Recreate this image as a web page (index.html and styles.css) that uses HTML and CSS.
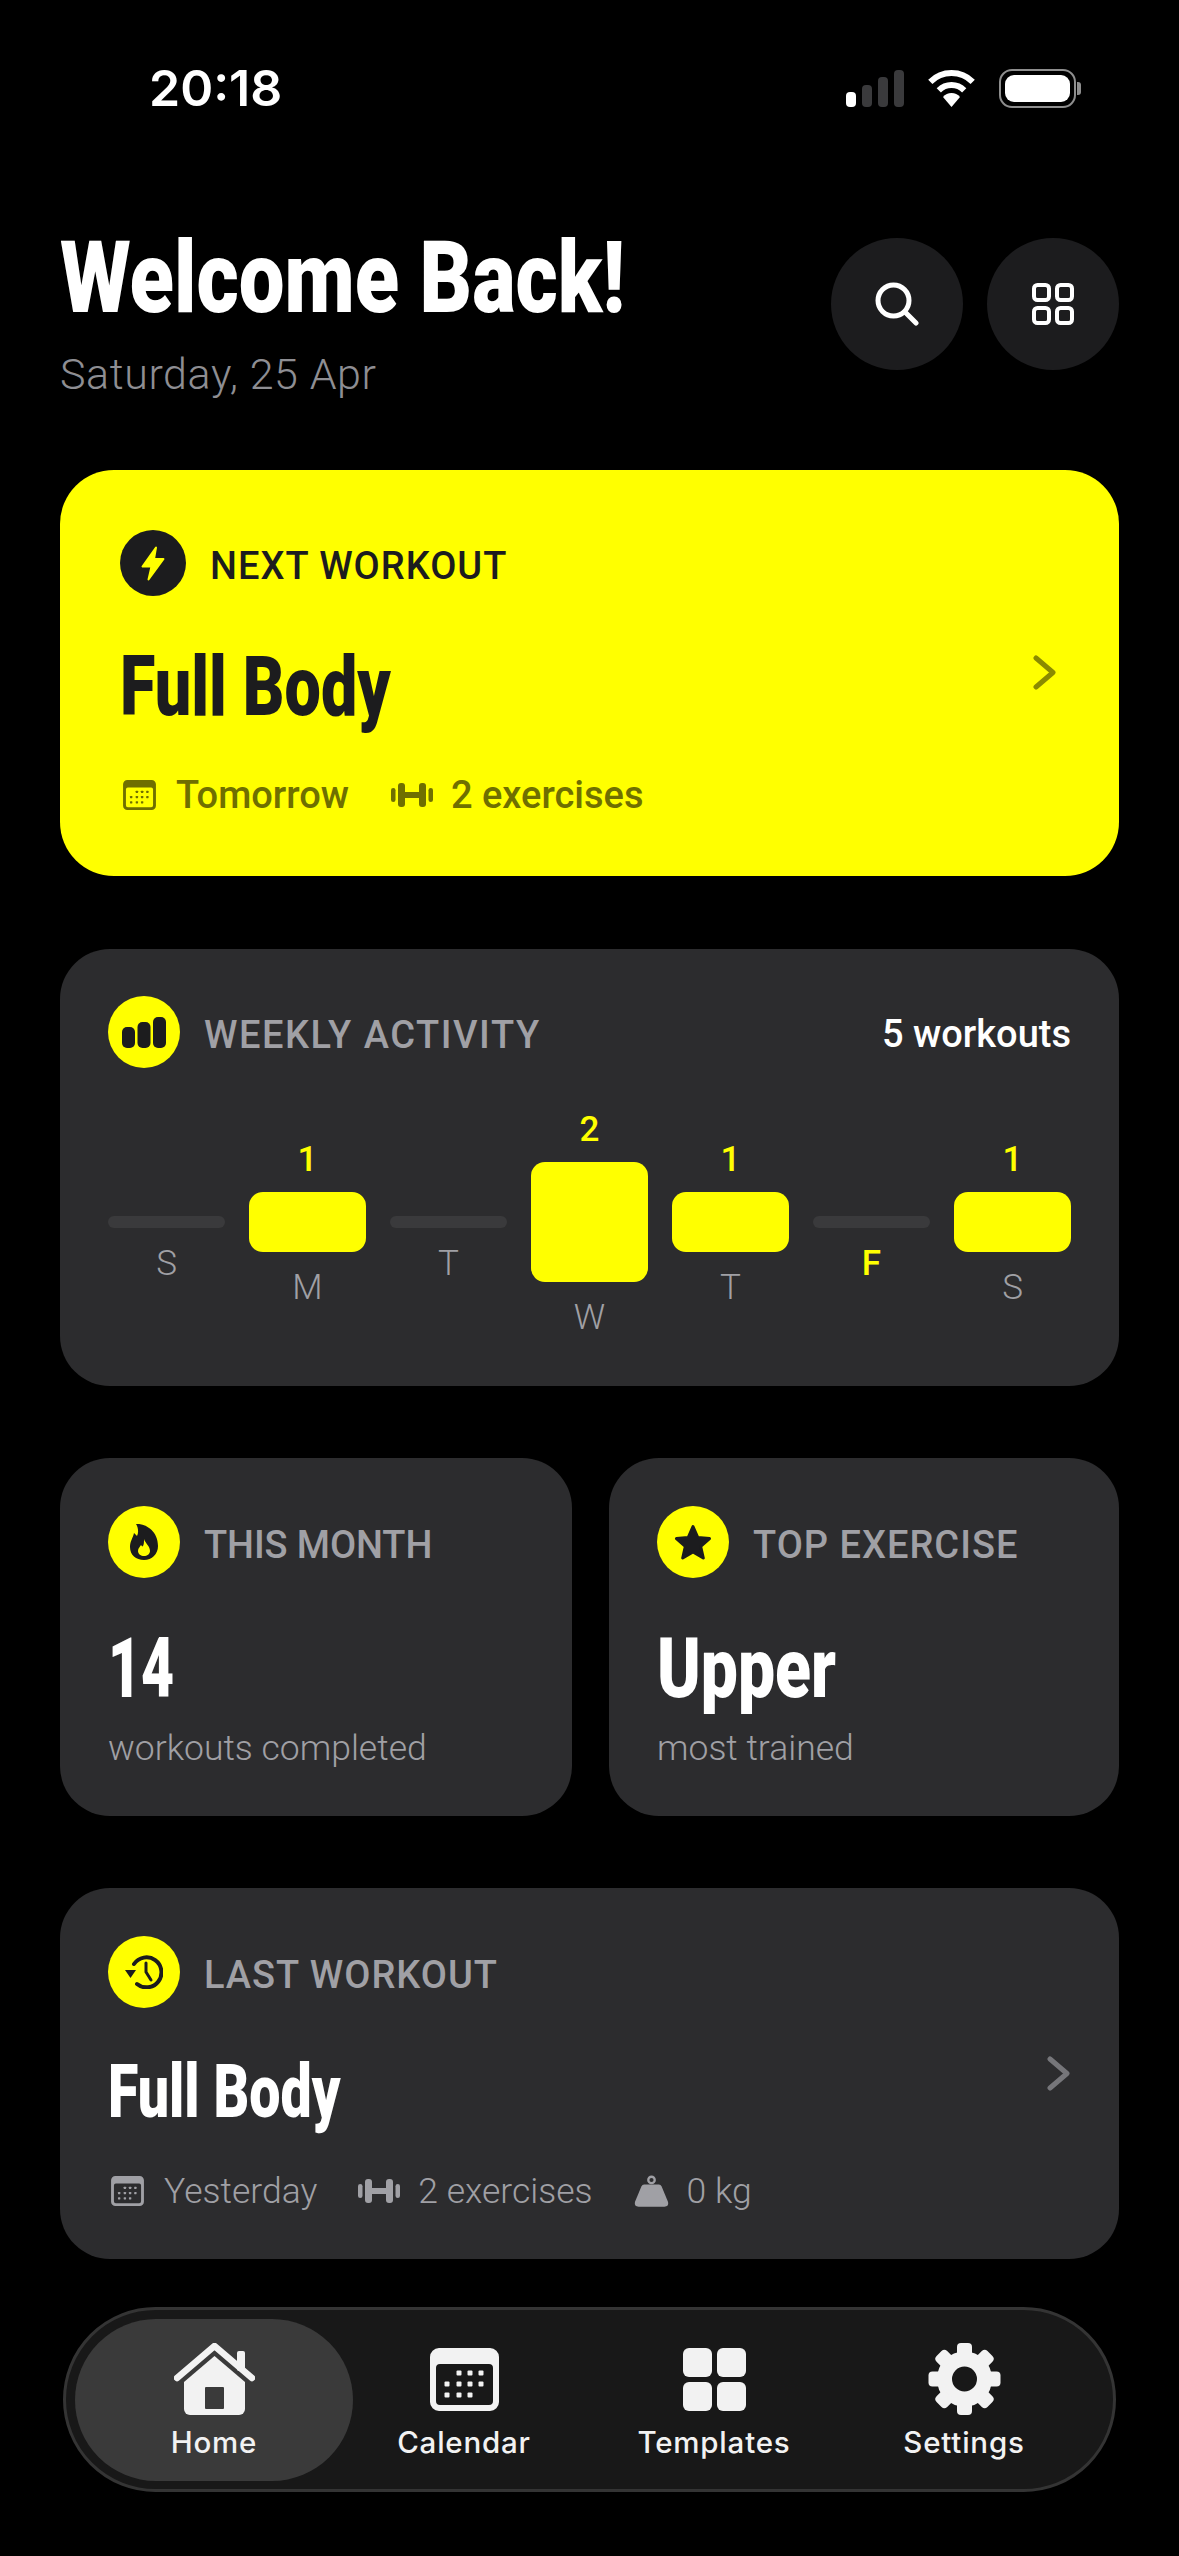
FILE: index.html
```html
<!doctype html>
<html lang="en">
<head>
  <meta charset="UTF-8" />
  <meta name="viewport" content="width=device-width, initial-scale=1.0" />
  <title>Home</title>
  <link rel="stylesheet" href="styles.css">
</head>
<body>

  <!-- shared icons -->
  <svg class="defs" width="0" height="0">
    <symbol id="cal" viewBox="0 0 69 63">
      <path fill-rule="evenodd" d="M9 0H60a9 9 0 0 1 9 9V54a9 9 0 0 1-9 9H9a9 9 0 0 1-9-9V9a9 9 0 0 1 9-9ZM10 16a4 4 0 0 0-4 4V53a4 4 0 0 0 4 4H59a4 4 0 0 0 4-4V20a4 4 0 0 0-4-4Z"/>
      <rect x="26.500" y="22.500" width="5" height="5" rx="1"/><rect x="37.500" y="22.500" width="5" height="5" rx="1"/><rect x="48.500" y="22.500" width="5" height="5" rx="1"/>
      <rect x="14.500" y="33.500" width="5" height="5" rx="1"/><rect x="26.500" y="33.500" width="5" height="5" rx="1"/><rect x="37.500" y="33.500" width="5" height="5" rx="1"/><rect x="48.500" y="33.500" width="5" height="5" rx="1"/>
      <rect x="14.500" y="44.500" width="5" height="5" rx="1"/><rect x="26.500" y="44.500" width="5" height="5" rx="1"/><rect x="37.500" y="44.500" width="5" height="5" rx="1"/>
    </symbol>
    <symbol id="bell" viewBox="0 0 42 26">
      <rect x="0" y="6" width="4.500" height="14" rx="2.250"/><rect x="7" y="1" width="7" height="24" rx="3"/><rect x="14" y="10" width="14" height="6"/><rect x="28" y="1" width="7" height="24" rx="3"/><rect x="37.500" y="6" width="4.500" height="14" rx="2.250"/>
    </symbol>
    <symbol id="chev" viewBox="0 0 25 35">
      <path d="M4 3L21 17.500L4 32" fill="none" stroke="currentColor" stroke-width="5" stroke-linecap="round" stroke-linejoin="round"/>
    </symbol>
  </svg>

  <div class="status">
    <span class="time">20:18</span>
    <div class="status-icons">
      <div class="signal">
        <i class="s1"></i><i class="s2"></i><i class="s3"></i><i class="s4"></i>
      </div>
      <svg class="wifi" width="51" height="37" viewBox="0 0 51 37" fill="none" stroke="#fff" stroke-width="6">
        <path d="M4.300 11.800A30 30 0 0 1 46.700 11.800"/>
        <path d="M12.800 20.300A18 18 0 0 1 38.200 20.300"/>
        <path d="M25.500 37L17 27A11 11 0 0 1 34 27Z" fill="#fff" stroke="none"/>
      </svg>
      <div class="battery"><div class="battery-fill"></div></div>
    </div>
  </div>

  <header class="header">
    <div>
      <h1 class="title">Welcome Back!</h1>
      <p class="date">Saturday, 25 Apr</p>
    </div>
    <div class="header-btns">
      <div class="round-btn">
        <svg width="44" height="44" viewBox="0 0 44 44" fill="none" stroke="#fff" stroke-width="5" stroke-linecap="round"><circle cx="18.500" cy="18.500" r="15.500"/><path d="M30 30L41 41"/></svg>
      </div>
      <div class="round-btn">
        <svg width="42" height="42" viewBox="0 0 42 42" fill="none" stroke="#fff" stroke-width="4"><rect x="2" y="2" width="15" height="15" rx="3.500"/><rect x="25" y="2" width="15" height="15" rx="3.500"/><rect x="2" y="25" width="15" height="15" rx="3.500"/><rect x="25" y="25" width="15" height="15" rx="3.500"/></svg>
      </div>
    </div>
  </header>

  <main class="cards">

    <section class="card next">
      <div class="card-body">
        <div class="card-head">
          <span class="badge badge-dark">
            <svg width="24" height="35" viewBox="0 0 24 35"><path d="M15 1.500L1.500 20.500H10.500L7.500 33.500L22.500 13H13Z" fill="#ffff00" stroke="#ffff00" stroke-width="2" stroke-linejoin="round"/></svg>
          </span>
          <span class="label label-dark">NEXT WORKOUT</span>
        </div>
        <h2 class="big-name">Full Body</h2>
        <div class="meta meta-dark">
          <span class="meta-item"><svg class="ic-cal"><use href="#cal"/></svg>Tomorrow</span>
          <span class="meta-item tight"><svg class="ic-bell"><use href="#bell"/></svg>2 exercises</span>
        </div>
      </div>
      <svg class="chev chev-next"><use href="#chev"/></svg>
    </section>

    <section class="card week">
      <div class="week-head">
        <div class="card-head">
          <span class="badge">
            <svg width="44" height="31" viewBox="0 0 44 31" fill="#1c1c1e"><rect x="0" y="10" width="13" height="21" rx="5"/><rect x="15.500" y="5" width="13" height="26" rx="5"/><rect x="31" y="0" width="13" height="31" rx="5"/></svg>
          </span>
          <span class="label label-wide">WEEKLY ACTIVITY</span>
        </div>
        <span class="week-total">5 workouts</span>
      </div>
      <div class="chart">
        <div class="day"><span class="count"></span><div class="bar bar-0"></div><span class="day-name">S</span></div>
        <div class="day"><span class="count">1</span><div class="bar bar-1"></div><span class="day-name">M</span></div>
        <div class="day"><span class="count"></span><div class="bar bar-0"></div><span class="day-name">T</span></div>
        <div class="day"><span class="count">2</span><div class="bar bar-2"></div><span class="day-name">W</span></div>
        <div class="day"><span class="count">1</span><div class="bar bar-1"></div><span class="day-name">T</span></div>
        <div class="day"><span class="count"></span><div class="bar bar-0"></div><span class="day-name today">F</span></div>
        <div class="day"><span class="count">1</span><div class="bar bar-1"></div><span class="day-name">S</span></div>
      </div>
    </section>

    <div class="two-up">
      <section class="card small">
        <div class="card-head">
          <span class="badge">
            <svg width="28" height="36" viewBox="0 0 28 36"><path d="M6 0C14-1 28 6 28 22C28 30 22 36 14 36C6 36 0 31 0 23C0 17 3 14 4 9C6 11 7 12 7 12C9 8 8 3 6 0Z" fill="#1c1c1e"/><path d="M14 15C15 19 20 22 20 27C20 30 17 32 14 32C11 32 8 30 8 27C8 24 10 23 11 21C12 22 12 23 13 22C14 20 14 18 14 15Z" fill="#ffff00"/></svg>
          </span>
          <span class="label label-narrow">THIS MONTH</span>
        </div>
        <div class="big-name value digits">14</div>
        <p class="sub">workouts completed</p>
      </section>
      <section class="card small">
        <div class="card-head">
          <span class="badge">
            <svg width="38" height="36" viewBox="0 0 38 36"><path d="M19 2.500L23.800 13.500L35.500 14.600L26.700 22.500L29.300 34L19 28L8.700 34L11.300 22.500L2.500 14.600L14.200 13.500Z" fill="#1c1c1e" stroke="#1c1c1e" stroke-width="3" stroke-linejoin="round"/></svg>
          </span>
          <span class="label">TOP EXERCISE</span>
        </div>
        <div class="big-name value">Upper</div>
        <p class="sub">most trained</p>
      </section>
    </div>

    <section class="card last">
      <div class="card-body">
        <div class="card-head">
          <span class="badge">
            <svg width="38" height="34" viewBox="0 0 38 34" fill="none" stroke="#1c1c1e" stroke-width="4" stroke-linecap="round" stroke-linejoin="round"><path d="M9 9A15 15 0 1 1 12 29"/><path d="M21 8V17L26 25" stroke-width="3"/><path d="M0 15H11L5.500 23Z" fill="#1c1c1e" stroke="none"/></svg>
          </span>
          <span class="label">LAST WORKOUT</span>
        </div>
        <h2 class="big-name last-name">Full Body</h2>
        <div class="meta meta-last">
          <span class="meta-item"><svg class="ic-cal"><use href="#cal"/></svg>Yesterday</span>
          <span class="meta-item tight"><svg class="ic-bell"><use href="#bell"/></svg>2 exercises</span>
          <span class="meta-item weight">
            <svg width="35" height="34" viewBox="0 0 38 34"><circle cx="19" cy="5" r="3.500" fill="none" stroke="#a0a0a5" stroke-width="2.500"/><path d="M11 10H27Q29 10 30 12L37 29Q38 34 33 34H5Q0 34 1 29L8 12Q9 10 11 10Z"/></svg>
            0 kg
          </span>
        </div>
      </div>
      <svg class="chev chev-last"><use href="#chev"/></svg>
    </section>

  </main>

  <nav class="tabbar">
    <div class="tab active">
      <span class="tab-icon">
        <svg width="81" height="72" viewBox="0 0 81 72" fill="#f2f2f2"><path d="M3 35L40.500 3L78 35" fill="none" stroke="#f2f2f2" stroke-width="6.500" stroke-linecap="round" stroke-linejoin="round"/><rect x="63" y="8" width="8" height="20" rx="2"/><path d="M40.500 13L71 39V66a6 6 0 0 1-6 6H16a6 6 0 0 1-6-6V39Z"/><rect x="31" y="44" width="19" height="22" rx="1" fill="#3a3a3a"/></svg>
      </span>
      <span class="tab-name">Home</span>
    </div>
    <div class="tab">
      <span class="tab-icon"><svg class="ic-tabcal"><use href="#cal"/></svg></span>
      <span class="tab-name">Calendar</span>
    </div>
    <div class="tab">
      <span class="tab-icon">
        <svg width="63" height="63" viewBox="0 0 63 63" fill="#f2f2f2"><rect width="29" height="29" rx="6"/><rect x="34" width="29" height="29" rx="6"/><rect y="34" width="29" height="29" rx="6"/><rect x="34" y="34" width="29" height="29" rx="6"/></svg>
      </span>
      <span class="tab-name">Templates</span>
    </div>
    <div class="tab">
      <span class="tab-icon">
        <svg width="73" height="72" viewBox="0 0 73 72" fill="#f2f2f2">
          <circle cx="36.500" cy="36" r="20" fill="none" stroke="#f2f2f2" stroke-width="15"/>
          <rect x="29" y="0" width="15" height="14" rx="4"/>
          <rect x="29" y="0" width="15" height="14" rx="4" transform="rotate(45 36.500 36)"/>
          <rect x="29" y="0" width="15" height="14" rx="4" transform="rotate(90 36.500 36)"/>
          <rect x="29" y="0" width="15" height="14" rx="4" transform="rotate(135 36.500 36)"/>
          <rect x="29" y="0" width="15" height="14" rx="4" transform="rotate(180 36.500 36)"/>
          <rect x="29" y="0" width="15" height="14" rx="4" transform="rotate(225 36.500 36)"/>
          <rect x="29" y="0" width="15" height="14" rx="4" transform="rotate(270 36.500 36)"/>
          <rect x="29" y="0" width="15" height="14" rx="4" transform="rotate(315 36.500 36)"/>
        </svg>
      </span>
      <span class="tab-name">Settings</span>
    </div>
  </nav>

</body>
</html>
```

FILE: styles.css
```css
* {
  box-sizing: border-box;
}

body {
  background: #000;
  margin: 0;
  width: 1179px;
  height: 2556px;
  overflow: hidden;
  font-family: Roboto, "Liberation Sans", sans-serif;
  color: #fff;
}

h1, h2, p {
  margin: 0;
}

.defs {
  position: absolute;
}

/* status bar */
.status {
  display: flex;
  justify-content: space-between;
  align-items: center;
  height: 108px;
  padding: 68px 98px 0 149px;
}

.time {
  font-family: Inter, sans-serif;
  font-size: 50px;
  font-weight: 600;
}

.status-icons {
  display: flex;
  align-items: center;
  gap: 22px;
}

.signal {
  display: flex;
  align-items: flex-end;
  gap: 6px;
  height: 37px;
}

.signal i {
  display: block;
  width: 10px;
  border-radius: 4px;
  background: #3a3a3c;
}

.signal .s1 { height: 15px; background: #fff; }
.signal .s2 { height: 22px; }
.signal .s3 { height: 30px; }
.signal .s4 { height: 37px; }

.battery {
  position: relative;
  width: 77px;
  height: 39px;
  padding: 4px;
  border: 2px solid #8e8e8e;
  border-radius: 13px;
  margin-right: 5px;
}

.battery::after {
  content: "";
  position: absolute;
  right: -7px;
  top: 11px;
  width: 4px;
  height: 13px;
  border-radius: 0 3px 3px 0;
  background: #8e8e8e;
}

.battery-fill {
  height: 100%;
  border-radius: 9px;
  background: #fff;
}

/* header */
.header {
  display: flex;
  justify-content: space-between;
  align-items: flex-start;
  padding: 0 60px;
  margin-top: 119px;
  margin-bottom: 73px;
}

.title {
  width: 640px;
  font-size: 101px;
  line-height: 101px;
  font-weight: 900;
  white-space: nowrap;
  transform: scaleX(.807);
  transform-origin: left;
}

.date {
  margin-top: 23px;
  font-size: 43px;
  line-height: 46px;
  font-weight: 300;
  letter-spacing: .6px;
  color: #8e8e93;
}

.header-btns {
  display: flex;
  gap: 24px;
  margin-top: 11px;
}

.round-btn {
  display: flex;
  align-items: center;
  justify-content: center;
  width: 132px;
  height: 132px;
  border-radius: 50%;
  background: #1c1c1e;
}

/* cards */
.cards {
  display: flex;
  flex-direction: column;
  gap: 72px;
  padding: 0 60px;
}

.card {
  background: #2c2c2e;
  border-radius: 50px;
}

.next {
  display: flex;
  align-items: center;
  justify-content: space-between;
  background: #ffff00;
  padding: 60px 62px 61px 60px;
  border-radius: 54px;
  margin-bottom: 1px;
}

.card-head {
  display: flex;
  align-items: center;
  gap: 24px;
}

.badge {
  display: flex;
  align-items: center;
  justify-content: center;
  width: 72px;
  height: 72px;
  border-radius: 50%;
  background: #ffff00;
}

.badge-dark {
  width: 66px;
  height: 66px;
  background: #1c1c1e;
}

.label {
  padding-top: 6px;
  font-size: 38px;
  font-weight: 500;
  letter-spacing: 1px;
  color: #a0a0a5;
}

.label-dark {
  color: #1c1c1e;
}

.label-wide {
  letter-spacing: 1.550px;
}

.label-narrow {
  letter-spacing: -.1px;
}

.big-name {
  width: 600px;
  margin-top: 49px;
  font-size: 84px;
  line-height: 84px;
  font-weight: 900;
  transform: scaleX(.77);
  transform-origin: left;
  color: #fff;
}

.next .big-name {
  color: #1c1c1e;
}

.meta {
  display: flex;
  align-items: center;
  gap: 42px;
  margin-left: 3px;
  font-size: 38px;
  line-height: 40px;
}

.meta-item {
  display: flex;
  align-items: center;
  gap: 20px;
}

.meta-item.tight {
  gap: 18px;
}

.meta-dark {
  margin-top: 46px;
  font-weight: 500;
  color: #6f6f00;
  fill: #6f6f00;
}

.meta-last {
  gap: 41px;
  margin-top: 42px;
  font-size: 35.500px;
  font-weight: 300;
  color: #a0a0a5;
  fill: #a0a0a5;
}

.meta .weight {
  gap: 18px;
}

.ic-cal {
  width: 33px;
  height: 30px;
}

.ic-bell {
  width: 42px;
  height: 26px;
}

.chev {
  width: 25px;
  height: 35px;
}

.chev-next {
  color: #8a8a00;
}

.chev-last {
  color: #76767a;
  margin-right: -11px;
}

.last {
  display: flex;
  align-items: center;
  justify-content: space-between;
  padding: 48px 59px 48px 48px;
}

/* weekly */
.week {
  padding: 47px 48px 44px;
}

.week-head {
  display: flex;
  align-items: center;
  justify-content: space-between;
}

.week-total {
  padding-top: 4px;
  font-size: 38px;
  font-weight: 500;
}

.chart {
  display: grid;
  grid-template-columns: repeat(7, 1fr);
  gap: 24px;
  height: 240px;
  margin-top: 34px;
}

.day {
  display: grid;
  grid-template-rows: 1fr auto 1fr;
  justify-items: center;
  height: 240px;
}

.count {
  align-self: end;
  margin-bottom: 15px;
  font-size: 35px;
  line-height: 35px;
  font-weight: 500;
  color: #ffff00;
}

.day-name {
  margin-top: 18px;
  font-size: 35px;
  line-height: 35px;
  font-weight: 300;
  color: #a0a0a5;
}

.day-name.today {
  font-weight: 500;
  color: #ffff00;
}

.bar {
  width: 100%;
  border-radius: 14px;
  background: #ffff00;
}

.bar-0 {
  height: 12px;
  border-radius: 6px;
  background: #3a3a3c;
}

.bar-1 {
  height: 60px;
}

.bar-2 {
  height: 120px;
}

/* two cards side by side */
.two-up {
  display: grid;
  grid-template-columns: 512px 510px;
  gap: 37px;
}

.small {
  padding: 48px 47px 48px 48px;
}

.value {
  width: 400px;
  transform: scaleX(.785);
}

.value.digits {
  transform: scaleX(.68);
}

.sub {
  margin-top: 17px;
  font-size: 35.500px;
  line-height: 40px;
  font-weight: 300;
  color: #a0a0a5;
}

.last-name {
  margin-top: 47px;
  font-size: 74px;
  line-height: 74px;
  transform: scaleX(.75);
}

/* tab bar */
.tabbar {
  display: grid;
  grid-template-columns: repeat(4, 250px);
  width: 1053px;
  height: 185px;
  margin: 48px 0 0 63px;
  padding: 9px 23px 8px;
  border: 3px solid #343434;
  border-radius: 93px;
  background: #181818;
}

.tab {
  display: flex;
  flex-direction: column;
  align-items: center;
  padding-top: 24px;
  border-radius: 81px;
}

.tab.active {
  margin: 0 -14px;
  background: #3a3a3a;
}

.tab-icon {
  display: flex;
  align-items: center;
  justify-content: center;
  height: 72px;
}

.ic-tabcal {
  width: 69px;
  height: 63px;
  fill: #f2f2f2;
}

.tab-name {
  margin-top: 8px;
  font-family: Inter, sans-serif;
  font-size: 29.500px;
  line-height: 38px;
  font-weight: 500;
  letter-spacing: .8px;
  color: #f2f2f2;
}
```
